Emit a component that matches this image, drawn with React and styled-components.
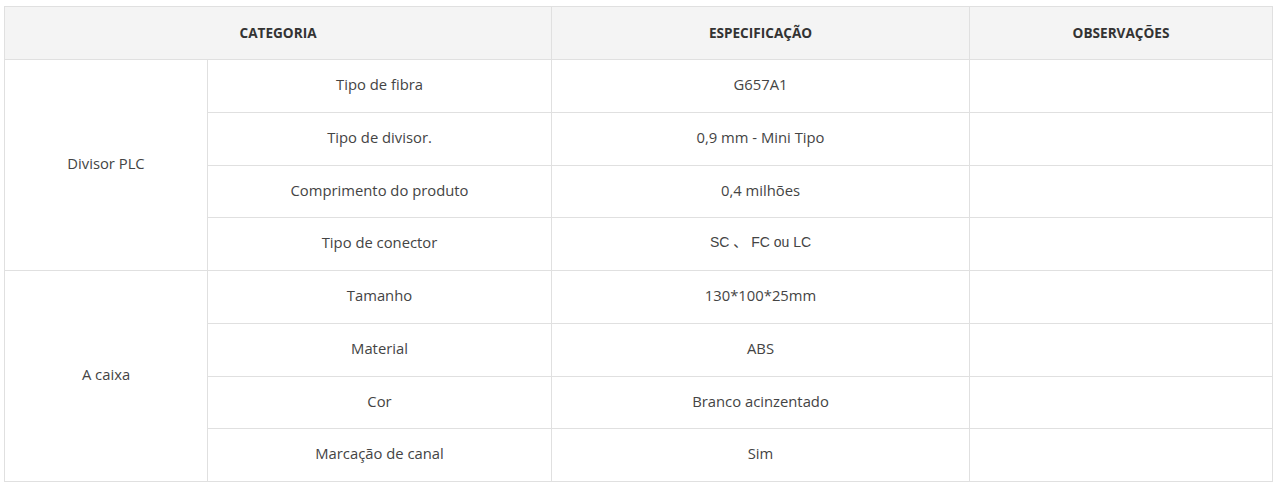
import styled, { createGlobalStyle } from "styled-components";

const GlobalStyle = createGlobalStyle`
  body {
    margin: 0;
    background: #fff;
    font-family: "Open Sans", "Noto Sans", sans-serif;
  }
`;

const rows = [
  {
    group: "Divisor PLC",
    items: [
      ["Tipo de fibra", "G657A1"],
      ["Tipo de divisor.", "0,9 mm - Mini Tipo"],
      ["Comprimento do produto", "0,4 milhões"],
      ["Tipo de conector", "SC 、 FC ou LC", true],
    ],
  },
  {
    group: "A caixa",
    items: [
      ["Tamanho", "130*100*25mm"],
      ["Material", "ABS"],
      ["Cor", "Branco acinzentado"],
      ["Marcação de canal", "Sim"],
    ],
  },
];

function App() {
  return (
    <>
      <GlobalStyle />
      <Wrapper>
        <Table>
          <colgroup>
            <col style={{ width: 203 }} />
            <col style={{ width: 344 }} />
            <col style={{ width: 418 }} />
            <col style={{ width: 303 }} />
          </colgroup>
          <thead>
            <Row $h={53}>
              <HeadCell colSpan={2}>CATEGORIA</HeadCell>
              <HeadCell>ESPECIFICAÇÃO</HeadCell>
              <HeadCell>OBSERVAÇÕES</HeadCell>
            </Row>
          </thead>
          <tbody>
            {rows.map((g) =>
              g.items.map(([name, spec, alt], i) => (
                <Row key={g.group + name} $h={52.75}>
                  {i === 0 && <Cell rowSpan={g.items.length}>{g.group}</Cell>}
                  <Cell>{name}</Cell>
                  <Cell $alt={alt}>{spec}</Cell>
                  <Cell />
                </Row>
              ))
            )}
          </tbody>
        </Table>
      </Wrapper>
    </>
  );
}

const Wrapper = styled.div`
  padding: 6px 5px 0 4px;
`;

const Table = styled.table`
  width: 1269px;
  border-collapse: collapse;
  table-layout: fixed;
`;

const Row = styled.tr`
  height: ${(p) => p.$h}px;
`;

const HeadCell = styled.th`
  border: 1px solid #e0e0e0;
  background: #f4f4f4;
  color: #333;
  font-size: 13.6px;
  font-weight: 700;
  text-align: center;
  padding: 0 8px 2px;
`;

const Cell = styled.td`
  border: 1px solid #e0e0e0;
  color: #444;
  font-size: ${(p) => (p.$alt ? "14px" : "14.8px")};
  font-family: ${(p) => (p.$alt ? '"Liberation Sans", "Noto Sans CJK SC", sans-serif' : "inherit")};
  text-align: center;
  padding: 0 8px 3px;
  line-height: 1.4;
`;

export default App;
